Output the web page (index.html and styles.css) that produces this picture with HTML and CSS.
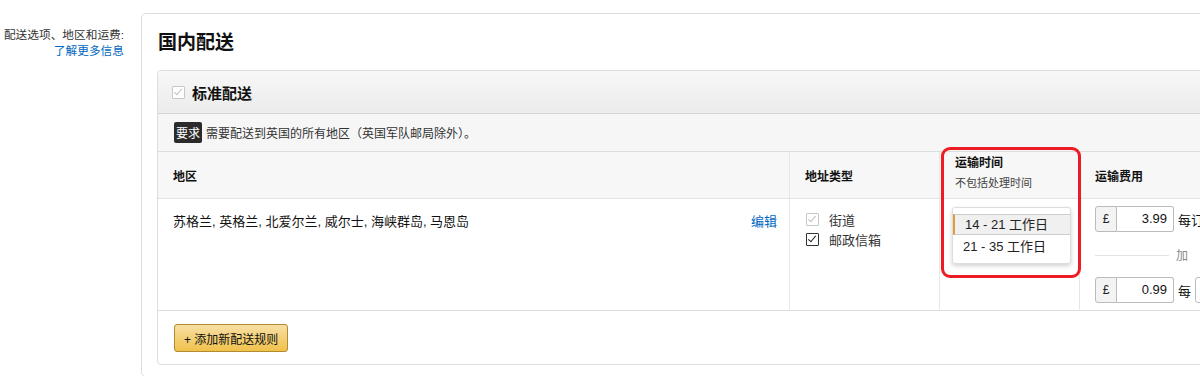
FILE: index.html
```html
<!DOCTYPE html>
<html lang="zh-CN">
<head>
    <meta charset="UTF-8">
    <title>国内配送</title>
    <link rel="stylesheet" href="styles.css">
</head>
<body>
    <div class="page">
        <div class="side">
            <div>配送选项、地区和运费:</div>
            <a href="#">了解更多信息</a>
        </div>

        <div class="card">
            <h1>国内配送</h1>
            <div class="box">
                <div class="box-head">
                    <span class="check disabled"></span>
                    <span class="box-title">标准配送</span>
                </div>
                <div class="require">
                    <span class="badge">要求</span> 需要配送到英国的所有地区（英国军队邮局除外）。
                </div>
                <div class="table">
                    <div class="th">地区</div>
                    <div class="th">地址类型</div>
                    <div class="th th-time">
                        <div>运输时间</div>
                        <div class="sub">不包括处理时间</div>
                    </div>
                    <div class="th">运输费用</div>

                    <div class="td region">
                        <span>苏格兰, 英格兰, 北爱尔兰, 威尔士, 海峡群岛, 马恩岛</span>
                        <a href="#">编辑</a>
                    </div>
                    <div class="td types">
                        <label><span class="check disabled"></span>街道</label>
                        <label><span class="check"></span>邮政信箱</label>
                    </div>
                    <div class="td">
                        <ul class="dropdown">
                            <li class="active">14 - 21 工作日</li>
                            <li>21 - 35 工作日</li>
                        </ul>
                    </div>
                    <div class="td fees">
                        <div class="fee">
                            <span class="addon">£</span><span class="amount">3.99</span><span class="per">每订</span>
                        </div>
                        <div class="plus"><span>加</span></div>
                        <div class="fee">
                            <span class="addon">£</span><span class="amount">0.99</span><span class="per">每</span><span class="unit"></span>
                        </div>
                    </div>
                </div>
                <div class="box-foot">
                    <button>+ 添加新配送规则</button>
                </div>
            </div>
        </div>

        <div class="highlight"></div>
    </div>
</body>
</html>
```

FILE: styles.css
```css
body {
    margin: 0;
    background: #fff;
    font-family: "Liberation Sans", "Noto Sans CJK SC", sans-serif;
    font-size: 12px;
    color: #111;
    overflow: hidden;
}
a {
    color: #0066c0;
    text-decoration: none;
}
.page {
    position: relative;
    display: flex;
    align-items: flex-start;
    width: 1400px;
}
.side {
    width: 124px;
    padding-top: 27px;
    text-align: right;
    font-size: 11.7px;
    line-height: 16px;
    color: #333;
}
.card {
    margin: 13px 0 0 17px;
    width: 1180px;
    border: 1px solid #ddd;
    border-radius: 5px;
    padding: 0 15px 11px 15px;
}
.card h1 {
    margin: 0;
    padding: 17px 0 15px 1px;
    font-size: 19px;
    line-height: 24px;
}
.box {
    border: 1px solid #ddd;
    border-radius: 4px;
}
.box-head {
    display: flex;
    align-items: center;
    height: 42px;
    padding-left: 14px;
    background: linear-gradient(#f7f7f7, #ececec);
    border-bottom: 1px solid #d5d5d5;
    border-radius: 4px 4px 0 0;
}
.box-title {
    margin-left: 7px;
    font-size: 15px;
    font-weight: bold;
}
.check {
    display: inline-block;
    width: 11px;
    height: 11px;
    border: 1px solid #333;
    border-radius: 1px;
    position: relative;
    background: #fff;
}
.check::after {
    content: "";
    position: absolute;
    left: 3px;
    top: 0;
    width: 3px;
    height: 7px;
    border: solid #222;
    border-width: 0 1.5px 1.5px 0;
    transform: rotate(40deg);
}
.check.disabled {
    border-color: #c8c8c8;
}
.check.disabled::after {
    border-color: #c0c0c0;
}
.require {
    height: 37px;
    display: flex;
    align-items: center;
    padding-left: 16px;
    background: #f6f6f6;
    border-bottom: 1px solid #ddd;
    color: #333;
}
.badge {
    background: #2b2b2b;
    color: #fff;
    padding: 2px 2px;
    margin-right: 4px;
    border-radius: 2px;
}
.table {
    display: grid;
    grid-template-columns: 631px 150px 140px 1fr;
}
.th {
    height: 46px;
    display: flex;
    align-items: center;
    padding-left: 15px;
    background: #f7f7f7;
    border-bottom: 1px solid #e3e3e3;
    border-left: 1px solid #e7e7e7;
    font-weight: bold;
}
.th:first-child {
    border-left: none;
}
.th-time {
    flex-direction: column;
    align-items: flex-start;
    justify-content: center;
    padding-bottom: 8px;
    height: 38px;
}
.th-time .sub {
    font-weight: normal;
    font-size: 11px;
    color: #444;
    margin-top: 4px;
}
.td {
    height: 111px;
    border-left: 1px solid #e7e7e7;
    border-bottom: 1px solid #ddd;
}
.td:nth-child(5) {
    border-left: none;
}
.region {
    display: flex;
    justify-content: space-between;
    padding: 12px 12px 0 15px;
    height: 99px;
    font-size: 13px;
}
.types {
    padding: 10px 0 0 16px;
    height: 101px;
    color: #333;
}
.types label {
    display: flex;
    align-items: center;
    height: 20px;
    font-size: 13px;
}
.types .check {
    margin-right: 10px;
}
.dropdown {
    list-style: none;
    margin: 8px 0 0 12px;
    padding: 6px 0 4px;
    width: 117px;
    border: 1px solid #ddd;
    border-radius: 3px;
    box-shadow: 0 2px 4px rgba(0, 0, 0, 0.18);
    background: #fff;
    font-size: 13px;
}
.dropdown li {
    height: 20px;
    line-height: 20px;
    padding-left: 12px;
    color: #222;
}
.dropdown li + li {
    height: 24px;
    line-height: 24px;
    padding-left: 10px;
}
.dropdown li.active {
    background: #f0f0f0;
    border-left: 2px solid #e09b3d;
    border-top: 1px solid #ccc;
    border-bottom: 1px solid #ccc;
    padding-left: 10px;
    height: 19px;
    line-height: 19px;
}
.fees {
    padding: 7px 0 0 15px;
    height: 104px;
}
.fee {
    display: flex;
    align-items: center;
    height: 26px;
    white-space: nowrap;
}
.addon {
    width: 20px;
    height: 24px;
    line-height: 24px;
    text-align: center;
    border: 1px solid #bbb;
    border-radius: 3px 0 0 3px;
    background: #f3f3f3;
    color: #222;
}
.amount {
    width: 50px;
    height: 24px;
    line-height: 24px;
    padding-right: 6px;
    text-align: right;
    border: 1px solid #bbb;
    border-left: none;
    border-radius: 0 3px 3px 0;
    font-size: 13px;
}
.per {
    margin-left: 4px;
    font-size: 13px;
}
.unit {
    width: 20px;
    height: 24px;
    margin-left: 4px;
    border: 1px solid #bbb;
    border-radius: 3px;
}
.plus {
    position: relative;
    height: 45px;
    width: 100px;
    display: flex;
    align-items: center;
    justify-content: flex-end;
    color: #888;
}
.plus::before {
    content: "";
    position: absolute;
    left: 0;
    right: 26px;
    top: 50%;
    border-top: 1px solid #e3e3e3;
}
.plus span {
    margin-right: 7px;
}
.box-foot {
    padding: 13px 16px 12px;
}
.box-foot button {
    height: 28px;
    padding: 0 9px;
    border: 1px solid #b38b2f;
    border-radius: 3px;
    background: linear-gradient(#f7dfa5, #f0c14b);
    font-family: "Liberation Sans", "Noto Sans CJK SC", sans-serif;
    font-size: 12px;
    color: #111;
}
.highlight {
    position: absolute;
    left: 941px;
    top: 147px;
    width: 134px;
    height: 125px;
    border: 3px solid #ec1b24;
    border-radius: 9px;
}
```
